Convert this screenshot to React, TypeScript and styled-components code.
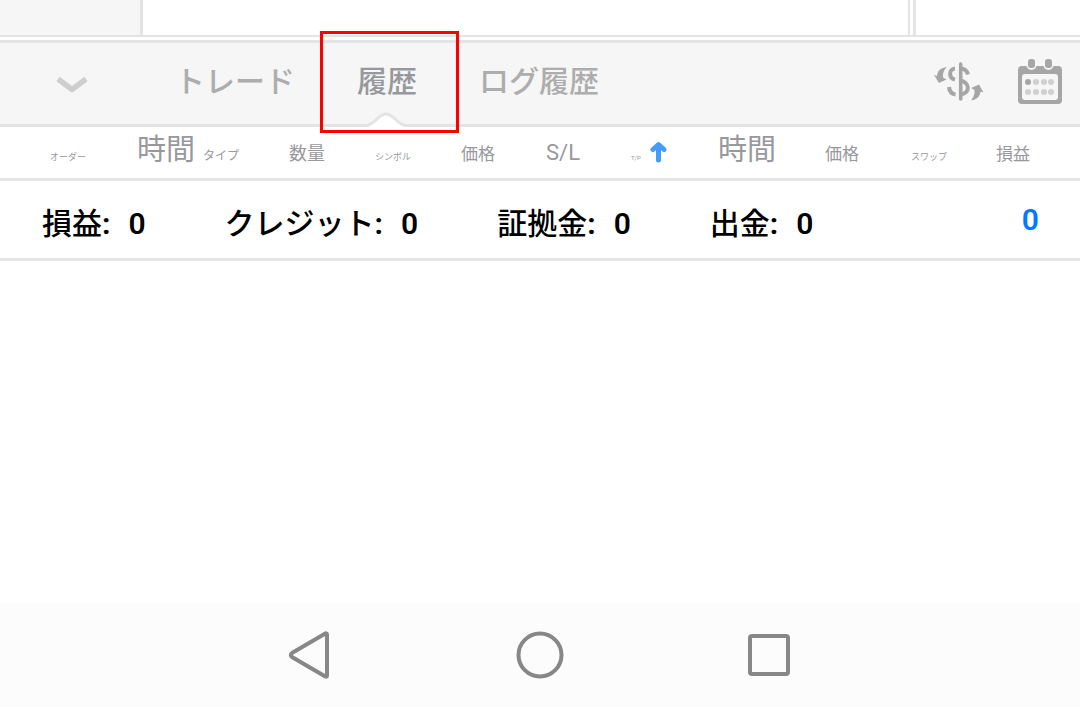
import React from "react";
import styled, { createGlobalStyle } from "styled-components";

const LINE = "#e4e4e4";
const PANEL = "#f6f6f6";

const GlobalStyle = createGlobalStyle`
  *, *::before, *::after { box-sizing: border-box; }
  body {
    margin: 0;
    background: #fff;
    font-family: Roboto, "Noto Sans CJK JP", sans-serif;
  }
  button {
    margin: 0;
    padding: 0;
    border: 0;
    background: none;
    font: inherit;
    color: inherit;
    cursor: pointer;
  }
`;

const Page = styled.div`
  min-height: 100vh;
  display: flex;
  flex-direction: column;
`;

const ChartStrip = styled.div`
  display: flex;
  height: 37px;
  margin-bottom: 3px;
  border-bottom: 2px solid ${LINE};
`;

const SidePane = styled.div`
  width: 143px;
  background: ${PANEL};
  border-right: 3px solid ${LINE};
`;

const ChartPane = styled.div`
  flex: 1;
  border-right: 2px solid ${LINE};
`;

const PricePane = styled.div`
  width: 167px;
  margin-left: 3px;
  border-left: 3px solid ${LINE};
`;

const TabBar = styled.header`
  display: flex;
  align-items: stretch;
  height: 87px;
  padding-right: 18px;
  background: ${PANEL};
  border-top: 3px solid ${LINE};
  border-bottom: 3px solid ${LINE};
`;

const CollapseButton = styled.button`
  display: flex;
  align-items: center;
  justify-content: center;
  width: 144px;
  padding-top: 3px;
`;

const Tabs = styled.div`
  display: flex;
  flex: 1;
`;

const Tab = styled.button<{ $active?: boolean }>`
  position: relative;
  padding: 0 31px 4px;
  font-size: 30px;
  line-height: 44px;
  font-weight: 500;
  white-space: nowrap;
  color: ${(p) => (p.$active ? "#97989d" : "#adadad")};
`;

const Notch = styled.svg`
  position: absolute;
  left: 50%;
  bottom: -3px;
  margin-left: -21px;
`;

const Highlight = styled.span`
  position: absolute;
  top: -12px;
  right: -11px;
  bottom: -9px;
  left: -6px;
  border: 3px solid #f00;
  pointer-events: none;
`;

const Tools = styled.div`
  display: flex;
  align-items: center;
  gap: 34px;
  padding-bottom: 4px;
`;

const ToolButton = styled.button`
  display: flex;
`;

const HistoryTable = styled.table`
  width: 100%;
  table-layout: fixed;
  border-spacing: 0;
  border-bottom: 3px solid ${LINE};
`;

const HeadRow = styled.tr`
  height: 51px;
`;

const HeadCell = styled.th<{ $size: number; $first?: boolean }>`
  padding: 8px 0 0 ${(p) => (p.$first ? 50 : 0)}px;
  font-size: ${(p) => p.$size}px;
  line-height: 30px;
  font-weight: 400;
  text-align: left;
  vertical-align: baseline;
  white-space: nowrap;
  color: #98989d;
`;

const SortArrow = styled.svg`
  margin-left: 9px;
  vertical-align: -3px;
`;

const Summary = styled.dl`
  display: flex;
  align-items: center;
  gap: 79px;
  height: 80px;
  margin: 0;
  padding: 8px 41px 0 42px;
  border-bottom: 3px solid ${LINE};
  font-size: 30px;
  line-height: 44px;
`;

const SummaryItem = styled.div`
  display: flex;
  align-items: baseline;
  gap: 18px;
`;

const SummaryLabel = styled.dt`
  font-weight: 500;
  color: #000;
`;

const Colon = styled.span`
  font-weight: 700;
`;

const SummaryValue = styled.dd`
  margin: 0;
  font-weight: 600;
  color: #000;
`;

const Total = styled.output`
  margin-left: auto;
  padding-bottom: 8px;
  font-weight: 600;
  color: #007aff;
`;

const History = styled.main`
  flex: 1;
`;

const SystemBar = styled.nav`
  display: flex;
  align-items: center;
  justify-content: center;
  gap: 182px;
  height: 104px;
  background: #fcfcfc;
`;

const SystemButton = styled.button`
  display: flex;
`;

const columns = [
  { label: "オーダー", size: 9, width: 137 },
  { label: "時間", size: 29, width: 66 },
  { label: "タイプ", size: 12, width: 86 },
  { label: "数量", size: 18, width: 86 },
  { label: "シンボル", size: 9, width: 86 },
  { label: "価格", size: 17, width: 85 },
  { label: "S/L", size: 22, width: 85 },
  { label: "T/P", size: 6, width: 87, sorted: true },
  { label: "時間", size: 29, width: 107 },
  { label: "価格", size: 17, width: 86 },
  { label: "スワップ", size: 9, width: 85 },
  { label: "損益", size: 17, width: 84 },
];

const totals = [
  { label: "損益", value: "0" },
  { label: "クレジット", value: "0" },
  { label: "証拠金", value: "0" },
  { label: "出金", value: "0" },
];

const CurrencyIcon = () => (
  <svg width="50" height="40" viewBox="0 0 50 40" fill="none" aria-hidden="true">
    <path d="M12.700 5C6 6 3.500 9 3 14L0 13L5 21L12.500 17.500L9 15.500C8.500 11 10 8 12.700 5Z" fill="#a6a6a6" />
    <path d="M37 38.500C43 37.500 46 34.500 46.500 29.500L49.500 30.500L45 22.500L37 26L40.500 28C41 32 39.500 35 37 38.500Z" fill="#a6a6a6" />
    <path d="M26.700 2V37" stroke="#a6a6a6" strokeWidth="3.600" strokeLinecap="round" />
    <path d="M21 6.500C14.500 7 14.500 16 21 17.500" stroke="#a6a6a6" strokeWidth="4" />
    <path d="M15 25C15.500 30 17.500 32 21.500 32.500" stroke="#a6a6a6" strokeWidth="4" />
    <path d="M27 6.500C31 6.800 33 8.500 34 12.500" stroke="#a6a6a6" strokeWidth="4" />
    <path d="M26 18.500C36 20 36.500 31 27 32.500" stroke="#a6a6a6" strokeWidth="4" />
  </svg>
);

const CalendarIcon = () => (
  <svg width="44" height="46" viewBox="0 0 44 46" aria-hidden="true">
    <rect y="7" width="44" height="38" rx="4" fill="#a6a6a6" />
    <rect x="4" y="15" width="36" height="26" rx="3" fill={PANEL} />
    {[13, 30].map((x) => (
      <rect key={x} x={x - 4.500} y="-2" width="10" height="13" rx="5" fill={PANEL} />
    ))}
    {[13, 30].map((x) => (
      <rect key={x} x={x - 3} y="0" width="7" height="9" rx="3" fill="#a6a6a6" />
    ))}
    {[10, 18, 26, 33].map((x) =>
      [23, 33].map((y) => (
        <circle key={`${x}-${y}`} cx={x} cy={y} r="3" fill={x === 10 && y === 23 ? "#a6a6a6" : "#d0d0d0"} />
      ))
    )}
  </svg>
);

export default function App() {
  return (
    <Page>
      <GlobalStyle />
      <ChartStrip>
        <SidePane />
        <ChartPane />
        <PricePane />
      </ChartStrip>
      <TabBar>
        <CollapseButton aria-label="閉じる">
          <svg width="32" height="18" viewBox="0 0 32 18" fill="none" aria-hidden="true">
            <path d="M2 3L16 13.500L30 3" stroke="#cecece" strokeWidth="5.500" strokeLinejoin="round" />
          </svg>
        </CollapseButton>
        <Tabs role="tablist">
          <Tab role="tab" aria-selected="false">トレード</Tab>
          <Tab role="tab" aria-selected="true" $active>
            履歴
            <Notch width="40" height="15" viewBox="0 0 40 15" fill="none" aria-hidden="true">
              <path d="M2 15C9 11 12 2 20 2C28 2 31 11 38 15Z" fill="#fff" />
              <path d="M0 13.500C9 13 12 2 20 2C28 2 31 13 40 13.500" stroke={LINE} strokeWidth="3" />
            </Notch>
            <Highlight />
          </Tab>
          <Tab role="tab" aria-selected="false">ログ履歴</Tab>
        </Tabs>
        <Tools>
          <ToolButton aria-label="通貨"><CurrencyIcon /></ToolButton>
          <ToolButton aria-label="期間"><CalendarIcon /></ToolButton>
        </Tools>
      </TabBar>
      <HistoryTable>
        <colgroup>
          {columns.map((c, i) => (
            <col key={i} width={c.width} />
          ))}
        </colgroup>
        <thead>
          <HeadRow>
            {columns.map((c, i) => (
              <HeadCell key={i} scope="col" $size={c.size} $first={i === 0} aria-sort={c.sorted ? "ascending" : undefined}>
                {c.label}
                {c.sorted && (
                  <SortArrow width="17" height="22" viewBox="0 0 17 22" fill="none" aria-hidden="true">
                    <path d="M8.500 19V4M3 8.500L8.500 3.500L14 8.500" stroke="#409cff" strokeWidth="5" strokeLinecap="round" strokeLinejoin="round" />
                  </SortArrow>
                )}
              </HeadCell>
            ))}
          </HeadRow>
        </thead>
      </HistoryTable>
      <Summary>
        {totals.map((t) => (
          <SummaryItem key={t.label}>
            <SummaryLabel>{t.label}<Colon>:</Colon></SummaryLabel>
            <SummaryValue>{t.value}</SummaryValue>
          </SummaryItem>
        ))}
        <Total>0</Total>
      </Summary>
      <History />
      <SystemBar>
        <SystemButton aria-label="戻る">
          <svg width="48" height="50" viewBox="0 0 48 50" fill="none" aria-hidden="true">
            <path d="M41 4.500V45.500Q41 47.500 38.500 46L6 27Q3.500 25 6 23L38.500 4Q41 2.500 41 4.500Z" stroke="#878787" strokeWidth="4" />
          </svg>
        </SystemButton>
        <SystemButton aria-label="ホーム">
          <svg width="48" height="50" viewBox="0 0 48 50" fill="none" aria-hidden="true">
            <circle cx="24" cy="25" r="21.500" stroke="#878787" strokeWidth="4" />
          </svg>
        </SystemButton>
        <SystemButton aria-label="アプリ履歴">
          <svg width="48" height="50" viewBox="0 0 48 50" fill="none" aria-hidden="true">
            <rect x="4" y="6" width="38" height="38" rx="2" stroke="#878787" strokeWidth="4" />
          </svg>
        </SystemButton>
      </SystemBar>
    </Page>
  );
}
